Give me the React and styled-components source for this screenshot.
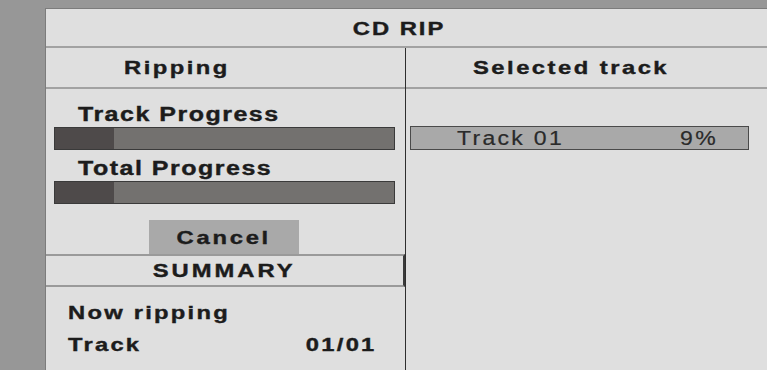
import styled, { createGlobalStyle } from 'styled-components';

const GlobalStyle = createGlobalStyle`
  html, body {
    margin: 0;
    padding: 0;
    background: #979797;
  }
  * {
    box-sizing: border-box;
  }
`;

// the OSD font is a wide, heavy grotesque: stretch Liberation Sans to match
const Wide = styled.span`
  display: inline-block;
  white-space: nowrap;
  transform: scaleX(${(p) => p.$scale || 1.25});
  transform-origin: ${(p) => p.$origin || 'center'};
`;

function ProgressBar({ percent }) {
  return (
    <Bar>
      <BarFill style={{ width: `${percent}%` }} />
    </Bar>
  );
}

export default function App() {
  return (
    <>
      <GlobalStyle />
      <Screen>
        <Panel>
          <Title>
            <Wide>CD RIP</Wide>
          </Title>
          <Columns>
            <LeftColumn>
              <ColumnHead $indent={78}>
                <Wide $origin="left">Ripping</Wide>
              </ColumnHead>
              <ProgressSection>
                <FieldLabel>
                  <Wide $origin="left">Track Progress</Wide>
                </FieldLabel>
                <ProgressBar percent={17.5} />
                <FieldLabel>
                  <Wide $origin="left">Total Progress</Wide>
                </FieldLabel>
                <ProgressBar percent={17.5} />
              </ProgressSection>
              <ButtonRow>
                <CancelButton>
                  <Wide>Cancel</Wide>
                </CancelButton>
              </ButtonRow>
              <SummaryHead>
                <Wide>SUMMARY</Wide>
              </SummaryHead>
              <SummaryBody>
                <SummaryRow>
                  <Wide $origin="left">Now ripping</Wide>
                </SummaryRow>
                <SummaryRow>
                  <Wide $origin="left">Track</Wide>
                  <Wide $origin="right">01/01</Wide>
                </SummaryRow>
              </SummaryBody>
            </LeftColumn>
            <RightColumn>
              <ColumnHead $indent={67}>
                <Wide $origin="left">Selected track</Wide>
              </ColumnHead>
              <TrackList>
                <TrackRow>
                  <Wide $origin="left" $scale={1.15}>Track 01</Wide>
                  <Wide $origin="right" $scale={1.15}>9%</Wide>
                </TrackRow>
              </TrackList>
            </RightColumn>
          </Columns>
        </Panel>
      </Screen>
    </>
  );
}

const Screen = styled.div`
  width: 767px;
  height: 370px;
  padding: 8px 0 0 45px;
  background: #979797;
  overflow: hidden;
`;

const Panel = styled.div`
  display: flex;
  flex-direction: column;
  height: 100%;
  background: #dfdfdf;
  border-top: 1px solid #7c7c7c;
  border-left: 1px solid #7c7c7c;
  font-family: 'Liberation Sans', Arial, sans-serif;
  font-weight: bold;
  color: #1c1c1c;
  -webkit-text-stroke: 0.4px #1c1c1c;
`;

const Title = styled.div`
  height: 39px;
  display: flex;
  align-items: center;
  justify-content: center;
  padding: 2px 16px 0 0;
  font-size: 19px;
  letter-spacing: 1.6px;
  border-bottom: 2px solid #a2a2a2;
`;

const Columns = styled.div`
  flex: 1;
  display: grid;
  grid-template-columns: 359px 1fr;
`;

const LeftColumn = styled.div`
  display: flex;
  flex-direction: column;
`;

const RightColumn = styled.div`
  display: flex;
  flex-direction: column;
  border-left: 1px solid #2e2e2e;
`;

const ColumnHead = styled.div`
  height: 41px;
  display: flex;
  align-items: center;
  padding-left: ${(p) => p.$indent}px;
  font-size: 19px;
  letter-spacing: 2px;
  border-bottom: 2px solid #a2a2a2;
`;

const ProgressSection = styled.div`
  display: flex;
  flex-direction: column;
  padding: 12px 10px 0 8px;
`;

const FieldLabel = styled.div`
  height: 26px;
  display: flex;
  align-items: center;
  padding-left: 24px;
  font-size: 20px;
  letter-spacing: 1.2px;
`;

const Bar = styled.div`
  height: 23px;
  margin-bottom: 5px;
  background: #73716f;
  border: 1px solid #3a3a3a;
`;

const BarFill = styled.div`
  height: 100%;
  background: #4e4a4a;
`;

const ButtonRow = styled.div`
  display: flex;
  justify-content: center;
  padding: 11px 4px 0 0;
`;

const CancelButton = styled.button`
  width: 150px;
  height: 34px;
  border: none;
  background: #a9a9a9;
  font-family: inherit;
  font-weight: bold;
  font-size: 19px;
  letter-spacing: 2.2px;
  color: #1c1c1c;
  -webkit-text-stroke: 0.4px #1c1c1c;
  padding: 2px 0 0 0;
`;

const SummaryHead = styled.div`
  height: 33px;
  display: flex;
  align-items: center;
  justify-content: center;
  font-size: 19px;
  letter-spacing: 2.4px;
  border-top: 2px solid #9a9a9a;
  border-bottom: 2px solid #9a9a9a;
  border-right: 2px solid #3a3a3a;
`;

const SummaryBody = styled.div`
  display: flex;
  flex-direction: column;
  padding: 10px 28px 0 22px;
`;

const SummaryRow = styled.div`
  height: 32px;
  display: flex;
  align-items: center;
  justify-content: space-between;
  font-size: 19px;
  letter-spacing: 1.8px;
`;

const TrackList = styled.div`
  display: flex;
  flex-direction: column;
  padding: 37px 18px 0 4px;
`;

const TrackRow = styled.div`
  height: 24px;
  display: flex;
  align-items: center;
  justify-content: space-between;
  padding: 0 30px 0 46px;
  background: #a9a9a9;
  border: 1px solid #4a4a4a;
  font-weight: normal;
  font-size: 20px;
  letter-spacing: 2px;
  color: #2a2a2a;
  -webkit-text-stroke: 0.2px #2a2a2a;
`;
